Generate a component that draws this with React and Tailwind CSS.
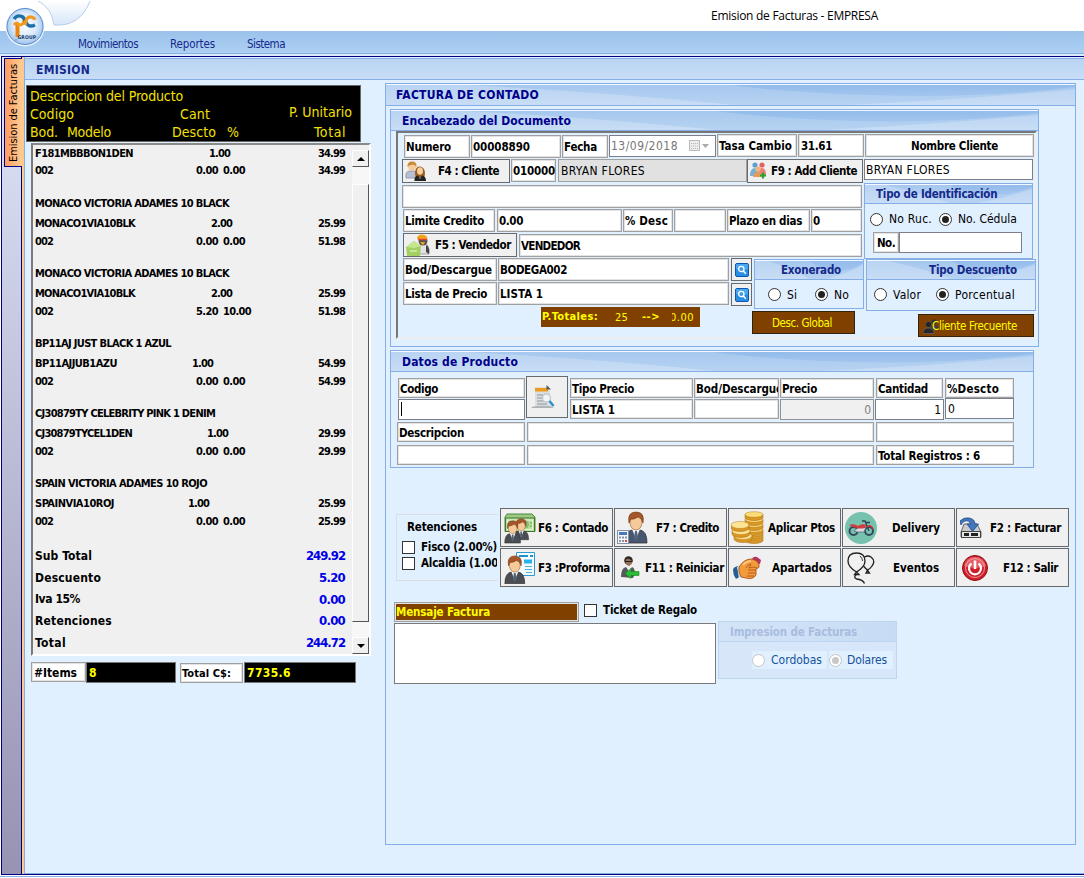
import { useLayoutEffect, useRef } from "react";

// Text run that spreads its letters so that it fills `w` pixels.
function T({ w, children, className = "" }) {
  const ref = useRef(null);
  useLayoutEffect(() => {
    const el = ref.current;
    el.style.letterSpacing = "0px";
    const n = el.textContent.length;
    const natural = parseFloat(getComputedStyle(el).width);
    if (w && n > 1) el.style.letterSpacing = (w - natural) / n + "px";
  }, [w, children]);
  return (
    <span ref={ref} className={`inline-block shrink-0 whitespace-pre ${className}`}>
      {children}
    </span>
  );
}

function Field({ children, w, className = "" }) {
  return (
    <div className={`flex shrink-0 items-center overflow-hidden border border-[#a0a0a0] bg-white pt-px pl-[2px] font-bold shadow-[inset_0_0_0_1px_#e3e3e3] ${className}`}>
      {children != null && <T w={w}>{children}</T>}
    </div>
  );
}

function Input({ children, w, className = "" }) {
  return (
    <div className={`flex shrink-0 items-center border border-[#7a7f8a] bg-white px-[3px] text-[12px] ${className}`}>
      {children != null && <T w={w}>{children}</T>}
    </div>
  );
}

function Header({ children, w, className = "" }) {
  return (
    <div className={`relative shrink-0 overflow-hidden border-b border-[#84aee5] bg-linear-to-b from-[#b8d3f2] to-[#c8ddf5] font-bold text-[#00008b] shadow-[inset_0_1px_0_#f4f9ff] ${className}`}>
      <svg className="absolute inset-x-0 top-px h-full w-full" viewBox="0 0 100 20" preserveAspectRatio="none">
        <defs>
          <linearGradient id="waveBack" x1="0" y1="0" x2="0" y2="1">
            <stop offset="0" stopColor="#a6c8ee" />
            <stop offset="1" stopColor="#b8d3f2" />
          </linearGradient>
          <linearGradient id="waveFront" x1="0" y1="0" x2="0" y2="1">
            <stop offset="0" stopColor="#93bceb" />
            <stop offset="1" stopColor="#a2c5ee" />
          </linearGradient>
        </defs>
        <path d="M12 0 Q32 7 52 20 H64 Q84 14 100 4 V0Z" fill="url(#waveBack)" />
        <path d="M50 0 Q62 10 78 10.500 Q90 10 100 2 V0Z" fill="url(#waveFront)" />
      </svg>
      <div className="relative flex h-full items-center pt-px">
        <T w={w}>{children}</T>
      </div>
    </div>
  );
}

function Radio({ on, dim, className = "" }) {
  return (
    <span className={`flex size-[13px] shrink-0 items-center justify-center rounded-full border bg-white ${dim ? "border-[#c4c4c4]" : "border-[#333]"} ${className}`}>
      {on && <span className={`size-[7px] rounded-full ${dim ? "bg-[#c8c8c8]" : "bg-[#222]"}`} />}
    </span>
  );
}

const Check = () => <span className="size-[13px] shrink-0 border border-[#333] bg-white" />;

/* ---------- icons ---------- */

const Logo = () => (
  <svg width="96" height="52" viewBox="0 0 96 52">
    <defs>
      <radialGradient id="lg" cx=".5" cy=".45" r=".55">
        <stop offset="0" stopColor="#fff" />
        <stop offset=".6" stopColor="#dbeafb" />
        <stop offset="1" stopColor="#9cc2ec" />
      </radialGradient>
      <linearGradient id="petal" x1="0" y1="0" x2="0" y2="1">
        <stop offset="0" stopColor="#fff" />
        <stop offset="1" stopColor="#d6e6f8" />
      </linearGradient>
    </defs>
    <path d="M38 1 Q52 8 54 25 Q80 27 90 1Z" fill="url(#petal)" />
    <path d="M38 1 Q52 8 54 25 Q80 27 90 1" fill="none" stroke="#b6cfee" />
    <circle cx="25" cy="27" r="19.500" fill="#eaf3fd" />
    <circle cx="25" cy="26.500" r="18" fill="url(#lg)" stroke="#5b8ccb" />
    <path d="M17.500 23 V37" stroke="#e8850f" strokeWidth="4" fill="none" />
    <path d="M14 25 Q17 21 19 25 Q24 25.500 24 19" stroke="#f29a1f" strokeWidth="3" fill="none" />
    <path d="M14 19 Q17 14.500 22 16.500 Q24.500 18 26 22.500 Q28.500 28 35 25" stroke="#1c6fa8" strokeWidth="3.400" fill="none" />
    <path d="M25 25 Q26 17 30 16.800 Q33 16.800 35.500 19.500" stroke="#f29a1f" strokeWidth="3.200" fill="none" />
    <text x="15" y="38.500" fontSize="5" fontWeight="bold" fill="#123a66" textLength="21">_GROUP</text>
  </svg>
);

function Person({ x = 0, y = 0, s = 1, hair = "#a5562a", suit = "#4c4d52", skin = "#f6c999" }) {
  return (
    <g transform={`translate(${x} ${y}) scale(${s})`}>
      <path d="M1 32 Q1 20 8 19 L16 19 Q23 20 23 32Z" fill={suit} stroke="#333" strokeWidth=".8" />
      <path d="M8 18 L12 28 L16 18Z" fill="#f7f9fc" />
      <path d="M11 20 h2 l1 7 -2 3 -2 -3Z" fill="#51647e" />
      <ellipse cx="12" cy="11.500" rx="6" ry="7.500" fill={skin} stroke="#9a6534" strokeWidth=".7" />
      <path d="M5 12 Q3 1 12 1 Q21 1 19 12 Q18 7 14 6 Q9 9 7 8 Q6 9 5 12Z" fill={hair} stroke="#6d3413" strokeWidth=".6" />
    </g>
  );
}

const ICONS = {
  couple: (
    <svg width="22" height="21" viewBox="0 0 22 21">
      <path d="M1 17 Q0 10 5 10 L9 10 Q13 11 12 17Z" fill="#b9bfd0" stroke="#8087a0" strokeWidth=".7" />
      <circle cx="7" cy="5.500" r="4" fill="#f5cb9a" />
      <path d="M2.500 6 Q2 .5 7 .5 Q12 .5 11.500 6 Q9 2.500 6 4 Q4 4 2.500 6Z" fill="#c58a35" />
      <path d="M10 13 Q10 5 15 5.500 Q20 6 20 13 L19 17 H11Z" fill="#9a5c1e" />
      <ellipse cx="15" cy="10" rx="3" ry="3.800" fill="#f9cf9c" />
      <path d="M9.500 20 Q9 15 13 14.500 L15 18 L17 14.500 Q21 15 21 20Z" fill="#222" />
    </svg>
  ),
  addClient: (
    <svg width="18" height="18" viewBox="0 0 18 18">
      <circle cx="5" cy="3" r="2.600" fill="#5f9fd0" />
      <path d="M0 14 Q0 6 5 6 Q8 6 8 14Z" fill="#76b1da" />
      <circle cx="12" cy="3" r="2.600" fill="#e06464" />
      <path d="M8 13 Q8 6 12 6 Q16 6 16 13Z" fill="#ef7b7b" />
      <circle cx="8" cy="7" r="2.600" fill="#f3b779" />
      <path d="M3 15 Q4 9.500 8 9.500 Q12 10 12 15Z" fill="#e49a58" />
      <path d="M13 10.500 v6 M10 13.500 h6" stroke="#2fa12f" strokeWidth="2.200" />
    </svg>
  ),
  seller: (
    <svg width="25" height="22" viewBox="0 0 25 22">
      <path d="M13 20 Q12 9 18 9 Q24 10 23 20Z" fill="#e2e2e2" stroke="#777" strokeWidth=".6" />
      <path d="M20 11 Q24 13 23 20 L20 18Z" fill="#444" />
      <circle cx="17" cy="7" r="4.500" fill="#555" />
      <path d="M11 5 Q11 .5 16 .5 Q21.500 1 21.500 5Z" fill="#f0a51f" />
      <path d="M12 5.500 h9" stroke="#e5442c" strokeWidth="1.500" />
      <path d="M14 8 h5 l-2 3.500Z" fill="#f59b1a" />
      <path d="M0 13 L8 7 L15 12 L14 22 H1Z" fill="#a4cf63" />
      <path d="M0 13 L8 7 L15 12 L8 14Z" fill="#c5e68f" />
      <path d="M4 17 h7" stroke="#d8efb2" strokeWidth="1.500" />
    </svg>
  ),
  search: (
    <svg width="14" height="14" viewBox="0 0 14 14">
      <rect x=".5" y=".5" width="13" height="13" rx="1.500" fill="#288fe5" stroke="#0d57ae" />
      <path d="M1 1 h12 v5 Q7 8 1 6Z" fill="#5db5f6" opacity=".6" />
      <circle cx="6.300" cy="6" r="2.700" fill="#3c9ce8" stroke="#fff" strokeWidth="1.300" />
      <path d="M8.300 8 l2.500 2.700" stroke="#fff" strokeWidth="1.600" />
    </svg>
  ),
  report: (
    <svg width="25" height="24" viewBox="0 0 25 24">
      <path d="M4 2 H15 L19 6 V18 Q20 22 23 23 H2 Q5 22 4 17Z" fill="#dcdfe2" />
      <path d="M0 22.500 Q3 20 19 21 L23 23 H1Z" fill="#b0b4b8" />
      <path d="M4 3 H17 V6.500 H4Z" fill="#ee9a1b" />
      <path d="M15.500 0 L20 4.500 H15.500Z" fill="#555" />
      <path d="M6 10 h6 M6 13 h5 M6 16 h8 M6 19 h10" stroke="#8f969c" strokeWidth="1.200" />
      <circle cx="15.500" cy="13" r="4" fill="#eef6fb" stroke="#c0c8ce" strokeWidth="1.300" />
      <path d="M18.500 16 l4 5" stroke="#2991c8" strokeWidth="2.400" />
    </svg>
  ),
  contado: (
    <svg width="32" height="32" viewBox="0 0 32 32">
      <path d="M3 2 H28 L31 5 V19.500 H1 V5Z" fill="#9cc985" stroke="#4b8a3a" />
      <rect x="1.500" y="6" width="29" height="13.500" fill="#b9dc9f" stroke="#3f7a31" />
      <rect x="3.500" y="8" width="25" height="9.500" fill="none" stroke="#e4f3d6" />
      <circle cx="21" cy="12.500" r="4" fill="#8abb70" />
      <path d="M26 11 h2 M26 14 h2" stroke="#69a250" />
      <Person x={9} y={6} s={0.68} />
      <Person x={0} y={8} s={0.72} />
    </svg>
  ),
  credito: (
    <svg width="32" height="33" viewBox="0 0 32 33">
      <Person x={7} y={0} s={1} suit="#49566f" />
      <rect x=".5" y="19.500" width="11" height="13" fill="#f6f7fa" stroke="#8292aa" />
      <rect x="2" y="21" width="8" height="3" fill="#4b79bd" />
      <path d="M2 26.500 h2 m1 0 h2 m1 0 h2 M2 30 h2 m1 0 h2" stroke="#8b94a3" strokeWidth="2" />
      <path d="M8 30 h2" stroke="#e2424b" strokeWidth="2" />
    </svg>
  ),
  coins: (
    <svg width="33" height="33" viewBox="0 0 33 33">
      {[25, 21, 17, 12, 7, 2].map((y) => (
        <g key={y}>
          <path d={`M14 ${y + 1.5} v3 a9 3 0 0 0 18 0 v-3Z`} fill="#d99725" stroke="#a4690f" strokeWidth=".5" />
          <ellipse cx="23" cy={y + 1.5} rx="9" ry="2.800" fill="#fbdc7a" stroke="#b97d17" strokeWidth=".5" />
        </g>
      ))}
      {[25, 20, 14].map((y, i) => (
        <g key={y}>
          <path d={`M${[3, 1, 0][i]} ${y} v3 a9 3.500 0 0 0 18 0 v-3Z`} fill="#d99725" stroke="#a4690f" strokeWidth=".5" />
          <ellipse cx={[12, 10, 9][i]} cy={y} rx="9" ry="3.500" fill="#fde596" stroke="#b97d17" strokeWidth=".5" />
        </g>
      ))}
    </svg>
  ),
  moto: (
    <svg width="32" height="32" viewBox="0 0 32 32">
      <circle cx="16" cy="16" r="16" fill="#76c2af" />
      <circle cx="8.500" cy="19" r="4" fill="none" stroke="#33495c" strokeWidth="2" />
      <circle cx="24" cy="19" r="4" fill="none" stroke="#33495c" strokeWidth="2" />
      <path d="M9 19 L14 15 H21 L19 20 H12Z" fill="#d8dde2" stroke="#5b6a78" strokeWidth=".8" />
      <path d="M4 13 Q9 11 13 14 Q17 11 21 13 L20 16 Q15 17 12 16 Q8 16 4 13Z" fill="#d23c3c" />
      <path d="M17 9 h3 L24 19 M21 10.500 h4" stroke="#2d4152" strokeWidth="1.300" fill="none" />
      <path d="M22 15 Q26 12 28 17" stroke="#c33" strokeWidth="1.500" fill="none" />
    </svg>
  ),
  disk: (
    <svg width="22" height="22" viewBox="0 0 22 22">
      <path d="M4 7 H17 L21 15 V20 H1 V15Z" fill="#c9cbce" stroke="#66696e" />
      <rect x="1.500" y="14.500" width="19" height="6" fill="#e5e6e8" stroke="#444" />
      <path d="M4 16 h5 v3 h-5z M11 16 h7 v3 h-7z" fill="#222" />
      <path d="M0 4 Q4 0 9 1 Q15 2 15 7 H18.500 L12.500 14.500 L7 7 H10.500 Q9 3 5 4 Q2 5 1 8Z" fill="#4377bd" stroke="#1f4a8a" strokeWidth=".8" />
    </svg>
  ),
  proforma: (
    <svg width="32" height="33" viewBox="0 0 32 33">
      <path d="M12.500 1.500 H30.500 V24.500 H12.500Z" fill="#f5fbff" stroke="#2b9ad3" />
      <path d="M15 5 h9 M26 5 h3" stroke="#1d95d2" strokeWidth="2" />
      <path d="M20 10.500 h8" stroke="#29b3ec" strokeWidth="4" />
      <path d="M21 15.500 h7 M21 18.500 h7 M22 21.500 h6" stroke="#49b7e6" />
      <Person x={0} y={4} s={0.9} />
    </svg>
  ),
  reset: (
    <svg width="19" height="23" viewBox="0 0 19 23">
      <circle cx="7.500" cy="4.500" r="4.300" fill="#2b2b2b" />
      <path d="M4.500 5 Q5 2 8.500 3 L11 5 Q11 9 8 10 Q4 9 4.500 5Z" fill="#9a6f58" />
      <path d="M4 5.500 h7" stroke="#222" />
      <path d="M0 21 Q0 12 5 11 L8 15 L11 11 Q14 12 14 18 L12 22Z" fill="#55585d" />
      <path d="M6 11 l2 6 2 -6Z" fill="#eee" />
      <path d="M4 17.500 L10 12.500 V15.500 H18 V19.500 H10 V22.500Z" fill="#2dbb37" stroke="#128a20" strokeWidth=".6" />
    </svg>
  ),
  hands: (
    <svg width="29" height="24" viewBox="0 0 29 24">
      <path d="M0 14 Q0 11 5 10 L8 20 L3 23 Q0 19 0 14Z" fill="#245e93" />
      <path d="M4 11 L7 10 L9 21 L6 22Z" fill="#d8e9f5" />
      <path d="M19 3 Q20 0 24 1 L28 4 L27 8 L22 7Z" fill="#b53263" />
      <path d="M6 11 Q11 3 18 3 Q25 4 26 9 Q27 12 23 13 L23 19 Q20 24 13 22 L8 21 Q5 16 6 11Z" fill="#f39a3c" stroke="#9a4c13" strokeWidth=".8" />
      <path d="M13 12 Q15 8 18 8 L16 12 Q20 10 24 12 M15 14 h8 M15 17 h8 M14 20 h7" fill="none" stroke="#b8611a" />
      <path d="M10 9 Q14 5 18 5" stroke="#ffd08b" strokeWidth="1.500" fill="none" />
    </svg>
  ),
  balloons: (
    <svg width="28" height="32" viewBox="0 0 28 32" fill="none" stroke="#222" strokeWidth="1.300">
      <path d="M9.500 20 Q1 15 1 9 Q1 1 9.500 1 Q18 1 18 9 Q18 15 9.500 20 L7.500 22.500 H12Z" />
      <path d="M17.500 5 Q21 3 24 5 Q29 9 25 14 Q23 17 20.500 18 Q18.500 16.500 16.500 14 M20.500 18 l-1.500 3 h3.500Z" />
      <path d="M9.500 22.500 Q6 25 9.500 27 Q16 27.500 17.500 31.500" />
      <path d="M13 4 Q15.500 6 15.500 9" strokeWidth=".9" />
    </svg>
  ),
  power: (
    <svg width="26" height="26" viewBox="0 0 26 26">
      <circle cx="13" cy="13" r="12.500" fill="#cf1f2a" stroke="#8f0f18" />
      <path d="M2 11 Q4 2 13 2 Q22 2 24 11 Q13 15 2 11Z" fill="#f0777c" opacity=".7" />
      <circle cx="13" cy="13" r="9.500" fill="none" stroke="#f4b3b5" strokeWidth=".8" />
      <path d="M9.500 8.500 A6 6 0 1 0 16.500 8.500" fill="none" stroke="#fff" strokeWidth="2.200" />
      <path d="M13 5.500 V14" stroke="#fff" strokeWidth="2.600" />
    </svg>
  ),
  frequent: (
    <svg width="16" height="15" viewBox="0 0 16 15" className="shrink-0">
      <circle cx="11" cy="2.800" r="2.600" fill="#303238" />
      <path d="M7 11 Q7 6 11 6 Q15.500 6 15.500 11Z" fill="#3a3d44" />
      <circle cx="5.500" cy="5.500" r="3" fill="#202226" stroke="#777" strokeWidth=".4" />
      <path d="M0 14.500 Q0 9 5.500 9 Q11 9 11 14.500Z" fill="#26282d" stroke="#8a8a8a" strokeWidth=".4" />
    </svg>
  ),
};

/* ---------- ticket ---------- */

const PRODUCTS = [
  { code: "F181MBBBON1DEN", cw: 98, qty: "1.00", row: "w-[195px]", price: "34.99", total: "34.99" },
  { name: "MONACO VICTORIA ADAMES 10 BLACK", nw: 194, code: "MONACO1VIA10BLK", cw: 100, qty: "2.00", row: "w-[197px]", price: "25.99", total: "51.98" },
  { name: "MONACO VICTORIA ADAMES 10 BLACK", nw: 194, code: "MONACO1VIA10BLK", cw: 100, qty: "2.00", row: "w-[197px]", price: "25.99", total: "51.98", disc: "5.20", pct: "10.00" },
  { name: "BP11AJ JUST BLACK 1 AZUL", nw: 136, code: "BP11AJJUB1AZU", cw: 82, qty: "1.00", row: "w-[178px]", price: "54.99", total: "54.99" },
  { name: "CJ30879TY CELEBRITY PINK 1 DENIM", nw: 180, code: "CJ30879TYCEL1DEN", cw: 97, qty: "1.00", row: "w-[193px]", price: "29.99", total: "29.99" },
  { name: "SPAIN VICTORIA ADAMES 10 ROJO", nw: 172, code: "SPAINVIA10ROJ", cw: 79, qty: "1.00", row: "w-[174px]", price: "25.99", total: "25.99" },
];

const SUMMARY = [
  ["Sub Total", 57, "249.92", 39],
  ["Descuento", 66, "5.20", 26],
  ["Iva 15%", 45, "0.00", 26],
  ["Retenciones", 77, "0.00", 26],
  ["Total", 31, "244.72", 39],
];

const SCROLL_PART = "border border-t-white border-r-[#555] border-b-[#555] border-l-white bg-[#f0f0f0]";

function Ticket() {
  return (
    <div className="flex h-[513px] w-[340px] border-2 border-t-[#8a8a8a] border-r-white border-b-white border-l-[#7a7a7a] bg-[#f0f0f0]">
      <div className="flex min-w-0 flex-1 flex-col overflow-hidden pr-[7px] pl-[2px] text-[11px] font-bold">
        {PRODUCTS.map((p, i) => (
          <div key={i} className={i ? "h-[70px]" : "h-[49px] shrink-0"}>
            {p.name && (
              <div className="flex h-5 items-center">
                <T w={p.nw}>{p.name}</T>
              </div>
            )}
            <div className={`flex items-center justify-between ${i ? "h-[19px]" : "h-[17px]"}`}>
              <div className={`flex justify-between ${p.row}`}>
                <T w={p.cw}>{p.code}</T>
                <T w={21}>{p.qty}</T>
              </div>
              <T w={27}>{p.price}</T>
            </div>
            <div className="flex h-[18px] items-center">
              <T w={18}>002</T>
              <T w={22} className="ml-[143px]">{p.disc || "0.00"}</T>
              <T w={p.pct ? 28 : 22} className="ml-[5px]">{p.pct || "0.00"}</T>
              <T w={27} className="ml-auto">{p.total}</T>
            </div>
          </div>
        ))}
        <div className="pt-px text-[12px]">
          {SUMMARY.map(([label, lw, value, vw]) => (
            <div key={label} className="flex h-[21.700px] items-center justify-between">
              <T w={lw}>{label}</T>
              <T w={vw} className="pt-px text-[13px] font-bold text-[#0000e6]">{value}</T>
            </div>
          ))}
        </div>
      </div>
      <div className="flex w-[17px] shrink-0 flex-col bg-[#f7f7f7]">
        <div className="h-[5px] bg-[#f0f0f0]" />
        <div className={`flex h-[17px] items-center justify-center ${SCROLL_PART}`}>
          <span className="border-x-4 border-b-4 border-x-transparent border-b-black" />
        </div>
        <div className="h-[17px]" />
        <div className={`flex-1 ${SCROLL_PART}`} />
        <div className="h-[15px]" />
        <div className={`flex h-[17px] items-center justify-center ${SCROLL_PART}`}>
          <span className="border-x-4 border-t-4 border-x-transparent border-t-black" />
        </div>
      </div>
    </div>
  );
}

function LeftColumn() {
  return (
    <div className="w-[344px] shrink-0 pt-[5px] pl-px">
      <div className="h-[57px] w-[335px] border border-[#666] bg-black pt-px pl-[3px] text-[14px] text-[#f5e000]">
        <div className="flex h-[18px] items-center">
          <T w={153}>Descripcion del Producto</T>
        </div>
        <div className="flex h-[18px] items-center">
          <T w={44}>Codigo</T>
          <T w={30} className="ml-[106px]">Cant</T>
          <T w={63} className="ml-[79px] pb-1">P. Unitario</T>
        </div>
        <div className="flex h-[18px] items-center">
          <T w={28}>Bod.</T>
          <T w={44} className="ml-[9px]">Modelo</T>
          <T w={44} className="ml-[61px]">Descto</T>
          <T w={13} className="ml-[11px]">%</T>
          <T w={32} className="ml-[75px]">Total</T>
        </div>
      </div>
      <div className="mt-px ml-[5px]">
        <Ticket />
      </div>
      <div className="mt-[6px] ml-[5px] flex text-[11px] font-bold">
        <Field w={43} className="h-5 w-[55px] text-[12px]">#Items</Field>
        <div className="flex h-[21px] w-[90px] items-center border border-[#777] bg-black pl-[2px] text-[12px] text-[#ffff00]">
          <T w={9}>8</T>
        </div>
        <Field w={49} className="ml-1 mt-px h-5 w-[63px] pl-px">Total C$:</Field>
        <div className="ml-px flex h-[21px] w-[112px] items-center border border-[#777] bg-black pl-[2px] text-[12px] text-[#ffff00]">
          <T w={44}>7735.6</T>
        </div>
      </div>
    </div>
  );
}

/* ---------- invoice form ---------- */

const BTN = "flex shrink-0 items-center border border-[#696969] bg-[#f0f0f0] font-bold";

function SearchButton({ className = "" }) {
  return <div className={`${BTN} h-[23px] w-[21px] justify-center ${className}`}>{ICONS.search}</div>;
}

function DocumentPanel() {
  return (
    <div className="h-[238px] w-[649px] border border-[#84aee5]">
      <Header w={169} className="h-[21px] pl-[11px] text-[12px]">Encabezado del Documento</Header>
      <div className="ml-[5px] flex h-[208px] w-[641px] border-2 border-t-[#777] border-r-[#eee] border-b-[#eee] border-l-[#777] pl-[4px]">
        <div className="w-[462px] shrink-0 pt-px">
          <div className="flex h-6 items-start gap-px pt-px pl-[2px]">
            <Field w={45} className="h-[23px] w-[66px] pl-px">Numero</Field>
            <Field w={57} className="h-[23px] w-[90px] pl-px">00008890</Field>
            <Field w={33} className="h-[23px] w-[46px] pl-px">Fecha</Field>
            <Input w={67} className="h-[22px] w-[107px] pl-px text-[#777]">13/09/2018</Input>
            <div className="relative -ml-[28px] flex h-[22px] w-[27px] items-center gap-[3px]">
              <svg width="24" height="12" viewBox="0 0 24 12">
                <rect x=".5" y=".5" width="10" height="10" fill="#eee" stroke="#bbb" />
                <path d="M2 3.500 h7 M2 6 h7 M2 8.500 h7" stroke="#b4b4b4" strokeDasharray="1 1" />
                <path d="M13 4 h7 l-3.500 4z" fill="#aaa" />
              </svg>
            </div>
            <Field w={73} className="-mt-px h-[23px] w-[80px] pl-px">Tasa Cambio</Field>
            <Field w={31} className="-mt-px h-[23px] w-[66px] pl-0">31.61</Field>
          </div>
          <div className="mt-px flex h-[26px] items-start">
            <div className={`${BTN} h-6 w-[108px] pl-[2px]`}>
              {ICONS.couple}
              <T w={61} className="ml-[11px]">F4 : Cliente</T>
            </div>
            <Field w={42} className="ml-px h-[23px] w-[45px] pl-px">010000</Field>
            <div className="ml-[2px] flex h-[23px] w-[189px] items-center border border-[#a0a0a0] bg-[#e1e1e1] pl-[2px] text-[12px]">
              <T w={84}>BRYAN FLORES</T>
            </div>
            <div className={`${BTN} h-6 w-[116px] pl-[2px]`}>
              {ICONS.addClient}
              <T w={86} className="ml-[3px]">F9 : Add Cliente</T>
            </div>
          </div>
          <Field className="h-[23px] w-[460px]" />
          <div className="mt-px ml-px flex">
            <Field w={79} className="h-[23px] w-[92px] pl-px">Limite Credito</Field>
            <Field w={24} className="ml-[2px] h-[23px] w-[125px] pl-px">0.00</Field>
            <Field w={43} className="ml-px h-[23px] w-[50px] pl-px">% Desc</Field>
            <Field className="ml-px h-[23px] w-[52px]" />
            <Field w={73} className="ml-px h-[23px] w-[83px] pl-px">Plazo en dias</Field>
            <Field w={7} className="ml-px h-[23px] w-[51px] pl-px">0</Field>
          </div>
          <div className="mt-px ml-px flex">
            <div className={`${BTN} h-6 w-[114px] pl-[2px]`}>
              {ICONS.seller}
              <T w={76} className="ml-[4px]">F5 : Vendedor</T>
            </div>
            <Field w={59} className="mt-px ml-[2px] h-[23px] w-[343px] pl-px">VENDEDOR</Field>
          </div>
          <div className="ml-px flex">
            <div className="w-[328px] pt-px">
              <div className="flex gap-px">
                <Field w={87} className="h-[23px] w-[94px] pl-px">Bod/Descargue</Field>
                <Field w={67} className="h-[23px] w-[231px] pl-px">BODEGA002</Field>
              </div>
              <div className="mt-px flex gap-px">
                <Field w={82} className="h-[23px] w-[94px] pl-px">Lista de Precio</Field>
                <Field w={43} className="h-[23px] w-[231px] pl-px">LISTA 1</Field>
              </div>
              <div className="mt-[2px] ml-[138px] flex h-5 w-[159px] items-center bg-[#804000] pl-px text-[11px] text-[#ffff00]">
                <T w={56} className="font-bold">P.Totales:</T>
                <T w={13} className="ml-[17px] pt-px">25</T>
                <T w={18} className="ml-[14px] font-bold">--&gt;</T>
                <span className="ml-[12px] flex w-[22px] justify-end overflow-hidden">
                  <T w={24} className="pt-px">0.00</T>
                </span>
              </div>
            </div>
            <div className="w-[21px] pt-px">
              <SearchButton />
              <SearchButton className="mt-[2px]" />
            </div>
            <div className="ml-[2px] w-[110px] pt-[2px]">
              <div className="h-[50px] border border-[#84aee5]">
                <Header w={60} className="h-5 pl-[26px] text-[11.500px] text-[#15298c]">Exonerado</Header>
                <div className="flex h-[29px] items-center pl-[13px] text-[12px]">
                  <Radio />
                  <T w={10} className="ml-[6px]">Si</T>
                  <Radio on className="ml-[18px]" />
                  <T w={15} className="ml-[6px]">No</T>
                </div>
              </div>
              <div className="mt-[2px] -ml-[2px] flex h-[23px] w-[103px] items-center border border-[#33220f] bg-[#804000] pl-[19px] text-[#ffff00]">
                <T w={60}>Desc. Global</T>
              </div>
            </div>
          </div>
        </div>
        <div className="w-[173px] shrink-0">
          <Field className="mt-px ml-px h-[23px] w-[169px] pl-[45px]" w={87}>Nombre Cliente</Field>
          <Input w={84} className="mt-[2px] h-[21px] w-[169px] pl-px">BRYAN FLORES</Input>
          <div className="mt-[3px] h-[76px] w-[169px] border border-[#84aee5]">
            <Header w={121} className="h-5 pl-[11px] text-[11.500px] text-[#15298c]">Tipo de Identificación</Header>
            <div className="mt-[7px] flex h-4 items-center pl-[5px] text-[12px]">
              <Radio />
              <T w={43} className="ml-[6px]">No Ruc.</T>
              <Radio on className="ml-[7px]" />
              <T w={59} className="ml-[6px]">No. Cédula</T>
            </div>
            <div className="mt-[5px] ml-[8px] flex">
              <Field w={18} className="h-[21px] w-[26px] pl-[3px]">No.</Field>
              <Input className="h-[21px] w-[123px]" />
            </div>
          </div>
          <div className="ml-[2px] h-[52px] w-[170px] border border-[#84aee5]">
            <Header w={88} className="h-5 pl-[62px] text-[11.500px] text-[#15298c]">Tipo Descuento</Header>
            <div className="flex h-[29px] items-center pl-[7px] text-[12px]">
              <Radio />
              <T w={28} className="ml-[6px]">Valor</T>
              <Radio on className="ml-[15px]" />
              <T w={60} className="ml-[6px]">Porcentual</T>
            </div>
          </div>
          <div className="mt-[3px] ml-[54px] flex h-[23px] w-[116px] items-center border border-[#33220f] bg-[#804000] pt-px pl-1 text-[#ffff00]">
            {ICONS.frequent}
            <T w={85} className="z-10 -ml-[7px]">Cliente Frecuente</T>
          </div>
        </div>
      </div>
    </div>
  );
}

function ProductPanel() {
  return (
    <div className="mt-[3px] h-[118px] w-[644px] border border-[#84aee5]">
      <Header w={116} className="h-[21px] pl-[11px] text-[12px]">Datos de Producto</Header>
      <div className="mt-[4px] ml-[6px] flex h-[46px] items-start">
        <div className="mt-[2px] ml-px w-[127px]">
          <Field w={38} className="h-5 pl-px">Codigo</Field>
          <Input className="mt-px h-[21px] pl-[2px]">
            {null}
          </Input>
          <div className="relative -mt-[18px] ml-[3px] h-[14px] w-px bg-black" />
        </div>
        <div className={`${BTN} ml-px h-[42px] w-[42px] justify-center pr-2`}>{ICONS.report}</div>
        <div className="mt-[2px] ml-[2px] w-[123px]">
          <Field w={62} className="h-5 pl-px">Tipo Precio</Field>
          <Field w={43} className="mt-px h-5 pl-px">LISTA 1</Field>
        </div>
        <div className="mt-[2px] ml-px w-[85px]">
          <Field w={87} className="h-5 pl-px">Bod/Descargue</Field>
          <Field className="mt-px h-5" />
        </div>
        <div className="mt-[2px] ml-px w-[94px]">
          <Field w={35} className="h-5 pl-px">Precio</Field>
          <div className="mt-px flex h-[21px] items-center justify-end border border-[#8f949c] bg-[#f0f0f0] pr-[2px] text-[12px] text-[#808080]">
            <T w={7}>0</T>
          </div>
        </div>
        <div className="mt-[2px] ml-px w-[69px]">
          <Field w={50} className="ml-px h-5 w-[67px] pl-px">Cantidad</Field>
          <Input w={7} className="mt-px h-[21px] justify-end pr-[2px]">1</Input>
        </div>
        <div className="mt-[2px] ml-px w-[69px]">
          <Field w={52} className="h-5 pl-px">%Descto</Field>
          <Input w={7} className="h-[21px] pl-[2px]">0</Input>
        </div>
      </div>
      <div className="ml-[6px] flex gap-[2px]">
        <Field w={65} className="h-5 w-[128px] pl-px">Descripcion</Field>
        <Field className="h-5 w-[347px]" />
        <Field className="h-5 w-[138px]" />
      </div>
      <div className="mt-[3px] ml-[6px] flex gap-[2px]">
        <Field className="h-5 w-[128px]" />
        <Field className="h-5 w-[347px]" />
        <Field w={102} className="h-5 w-[138px] pl-px">Total Registros : 6</Field>
      </div>
    </div>
  );
}

const ACTIONS = [
  ["contado", "F6 : Contado", 70, "pl-[3px] pr-[4px]"],
  ["credito", "F7 : Credito", 63, "pl-[2px] pr-[7px]"],
  ["coins", "Aplicar Ptos", 67, "pl-[2px] pr-[5px]"],
  ["moto", "Delivery", 48, "pl-[2px] pr-[14px]"],
  ["disk", "F2 : Facturar", 71, "pl-[3px] pr-[7px]"],
  ["proforma", "F3 :Proforma", 72, "pl-[3px] pr-[2px]"],
  ["reset", "F11 : Reiniciar", 79, "pl-[6px] pr-[2px]"],
  ["hands", "Apartados", 60, "pl-[4px] pr-[8px]"],
  ["balloons", "Eventos", 46, "pl-[4px] pr-[15px]"],
  ["power", "F12 : Salir", 55, "pl-[5px] pr-[10px]"],
];

function Actions() {
  return (
    <div className="mt-[40px] flex">
      <div className="mt-[6px] ml-[6px] h-[67px] w-[102px] overflow-hidden border border-[#d8dde6] border-r-transparent">
        <div className="flex h-6 items-center pl-[10px] font-bold">
          <T w={70}>Retenciones</T>
        </div>
        <div className="ml-[5px] flex h-4 items-center gap-[6px] font-bold">
          <Check />
          <T w={76}>Fisco (2.00%)</T>
        </div>
        <div className="ml-[5px] flex h-4 items-center gap-[6px] font-bold">
          <Check />
          <T w={92}>Alcaldia (1.00%)</T>
        </div>
      </div>
      <div className="ml-[2px] grid grid-cols-[repeat(5,113px)] grid-rows-[39px_39px] gap-px">
        {ACTIONS.map(([icon, label, w, pad]) => (
          <div key={icon} className={`${BTN} justify-between ${pad}`}>
            {ICONS[icon]}
            <T w={w} className="pt-px">{label}</T>
          </div>
        ))}
      </div>
    </div>
  );
}

function MessageArea() {
  return (
    <div className="mt-[15px] ml-[4px] flex">
      <div className="w-[322px]">
        <div className="flex items-start">
          <div className="flex h-5 w-[185px] items-center border border-[#a0a0a0] bg-[#804000] pl-px font-bold text-[#ffff00] shadow-[inset_0_0_0_1px_#e3e3e3]">
            <T w={94}>Mensaje Factura</T>
          </div>
          <div className="mt-px ml-[5px] flex items-center gap-[6px] font-bold">
            <Check />
            <T w={94}>Ticket de Regalo</T>
          </div>
        </div>
        <div className="mt-px h-[61px] border border-[#7a7a7a] bg-white" />
      </div>
      <div className="mt-[19px] ml-[2px] h-[58px] w-[179px] border border-[#bcd5f0] bg-[#d7e6f8]">
        <div className="flex h-5 items-center border-b border-[#bcd5f0] bg-linear-to-r from-[#d4e4f7] to-[#c6dcf4] pt-px pl-[11px] font-bold text-[#a9bce0]">
          <T w={127}>Impresion de Facturas</T>
        </div>
        <div className="mt-[9px] ml-[33px] flex gap-[2px] text-[12px] text-[#16539b]">
          <div className="flex h-[18px] w-[75px] items-center bg-[#e1f0ff]">
            <Radio dim />
            <T w={51} className="ml-[6px]">Cordobas</T>
          </div>
          <div className="flex h-[18px] w-[64px] items-center bg-[#e1f0ff]">
            <Radio on dim />
            <T w={40} className="ml-[5px]">Dolares</T>
          </div>
        </div>
      </div>
    </div>
  );
}

export default function App() {
  return (
    <div className="flex h-[878px] w-[1084px] flex-col overflow-hidden bg-white font-['DejaVu_Sans_Condensed','DejaVu_Sans',sans-serif] text-[11.500px] leading-[14px] text-black">
      <header className="relative h-[56px] shrink-0">
        <div className="flex h-[31px] items-center pl-[711px] font-['Open_Sans','Noto_Sans',sans-serif] text-[12px]">
          <T w={167}>Emision de Facturas - EMPRESA</T>
        </div>
        <nav className="flex h-[23px] items-center border-b border-[#84b0e6] bg-linear-to-b from-[#9bc2ec] to-[#add0f3] pt-[4px] pl-[78px] text-[#15298c]">
          <T w={60}>Movimientos</T>
          <T w={45} className="ml-8">Reportes</T>
          <T w={38} className="ml-8">Sistema</T>
        </nav>
        <div className="h-[2px] bg-[#dcebfb]" />
        <div className="absolute top-0 left-0">
          <Logo />
        </div>
      </header>
      <div className="ml-px flex h-[819px] shrink-0 border-y border-l border-[#000080]">
        <aside className="flex w-[20px] shrink-0 flex-col border-r border-[#000080] bg-linear-to-b from-[#dfe6f8] to-[#9793b3]">
          <div className="mt-px ml-[2px] flex h-[109px] w-[18px] items-center justify-center border border-r-0 border-[#000080] bg-linear-to-r from-[#ff9c62] to-[#ffcb91] text-[11px] text-black">
            <T w={98} className="-rotate-90">Emision de Facturas</T>
          </div>
        </aside>
        <div className="w-[2px] shrink-0 bg-[#ffc98c]" />
        <main className="flex min-w-0 flex-1 flex-col border-l border-b border-[#84aee5] bg-[#e1f0ff]">
          <div className="mt-px flex h-[22px] shrink-0 items-center border-y border-[#84aee5] bg-linear-to-b from-[#b9d4f2] to-[#c8ddf6] pt-px pl-[11px] text-[12px] font-bold text-[#15298c]">
            <T w={54}>EMISION</T>
          </div>
          <div className="flex">
            <LeftColumn />
            <section className="mt-[3px] ml-[16px] h-[762px] w-[691px] border border-[#84aee5]">
              <Header w={143} className="h-[22px] pl-[10px] text-[12px]">FACTURA DE CONTADO</Header>
              <div className="mt-[3px] ml-[4px]">
                <DocumentPanel />
                <ProductPanel />
                <Actions />
                <MessageArea />
              </div>
            </section>
          </div>
        </main>
      </div>
      <div className="mt-px h-px bg-[#84b0e6]" />
    </div>
  );
}
